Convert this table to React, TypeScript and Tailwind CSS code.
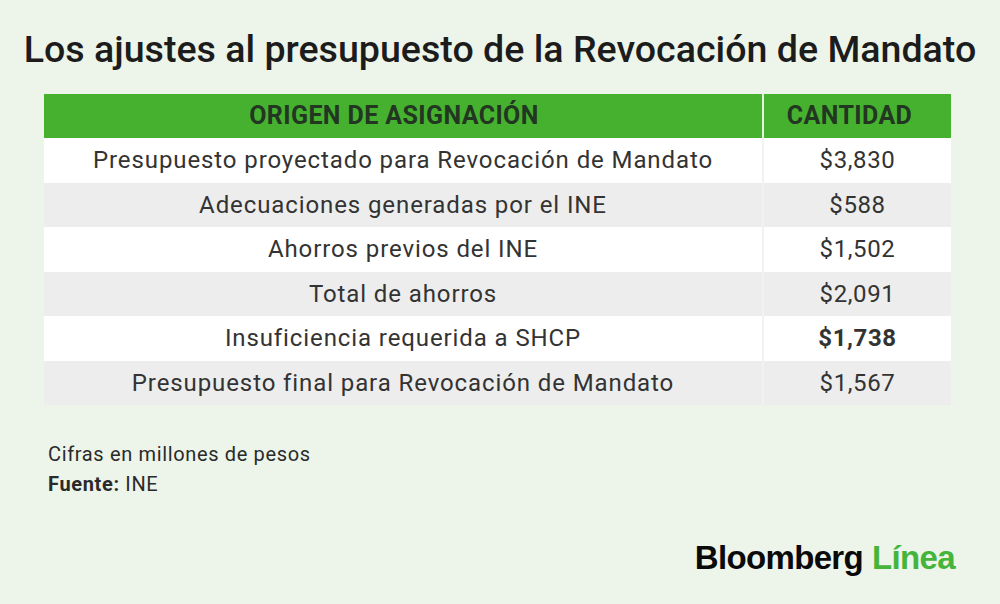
const rows = [
  { label: "Presupuesto proyectado para Revocación de Mandato", value: "$3,830" },
  { label: "Adecuaciones generadas por el INE", value: "$588" },
  { label: "Ahorros previos del INE", value: "$1,502" },
  { label: "Total de ahorros", value: "$2,091" },
  { label: "Insuficiencia requerida a SHCP", value: "$1,738", bold: true },
  { label: "Presupuesto final para Revocación de Mandato", value: "$1,567" },
];

export default function App() {
  return (
    <div
      className="w-[1000px] h-[604px] bg-[#edf5ea] flex flex-col overflow-hidden"
      style={{ fontFamily: "Roboto, 'Liberation Sans', sans-serif" }}
    >
      {/* Title */}
      <h1 className="mt-[26px] text-center text-[37.6px] leading-[46px] font-medium text-[#1c1c1c]">
        Los ajustes al presupuesto de la Revocación de Mandato
      </h1>

      {/* Table */}
      <div className="mt-[22px] ml-[44px] w-[907px] flex flex-col">
        <div className="flex h-[44px] bg-[#46b12f]">
          <div className="w-[720px] pr-[18px] flex items-center justify-center text-[25px] font-bold tracking-[0.4px] text-[#223622] border-r-2 border-[#e6f0e1]">
            ORIGEN DE ASIGNACIÓN
          </div>
          <div className="flex-1 pr-[16px] flex items-center justify-center text-[25px] font-bold tracking-[0.4px] text-[#223622]">
            CANTIDAD
          </div>
        </div>
        {rows.map((row, i) => (
          <div
            key={row.label}
            className={`flex h-[44.5px] ${i % 2 === 0 ? "bg-white" : "bg-[#ededed]"}`}
          >
            <div className="w-[720px] flex items-center justify-center text-[24px] tracking-[0.9px] text-[#333333] border-r-2 border-[#f2f2f2]">
              {row.label}
            </div>
            <div
              className={`flex-1 flex items-center justify-center text-[24px] tracking-[0.6px] text-[#333333] ${
                row.bold ? "font-bold" : ""
              }`}
            >
              {row.value}
            </div>
          </div>
        ))}
      </div>

      {/* Notes */}
      <div className="mt-[34px] ml-[48px] flex flex-col text-[20px] leading-[30px] tracking-[0.65px] text-[#2a2a2a]">
        <p>Cifras en millones de pesos</p>
        <p>
          <span className="font-bold">Fuente:</span> INE
        </p>
      </div>

      {/* Logo */}
      <div
        className="mt-auto mb-[26px] mr-[45px] self-end flex items-baseline gap-[9px] text-[33px] leading-[40px] font-black tracking-[-0.65px]"
        style={{ fontFamily: "'Liberation Sans', Arial, sans-serif" }}
      >
        <span className="text-[#0a0a0a]">Bloomberg</span>
        <span className="text-[#45b43a]">Línea</span>
      </div>
    </div>
  );
}
